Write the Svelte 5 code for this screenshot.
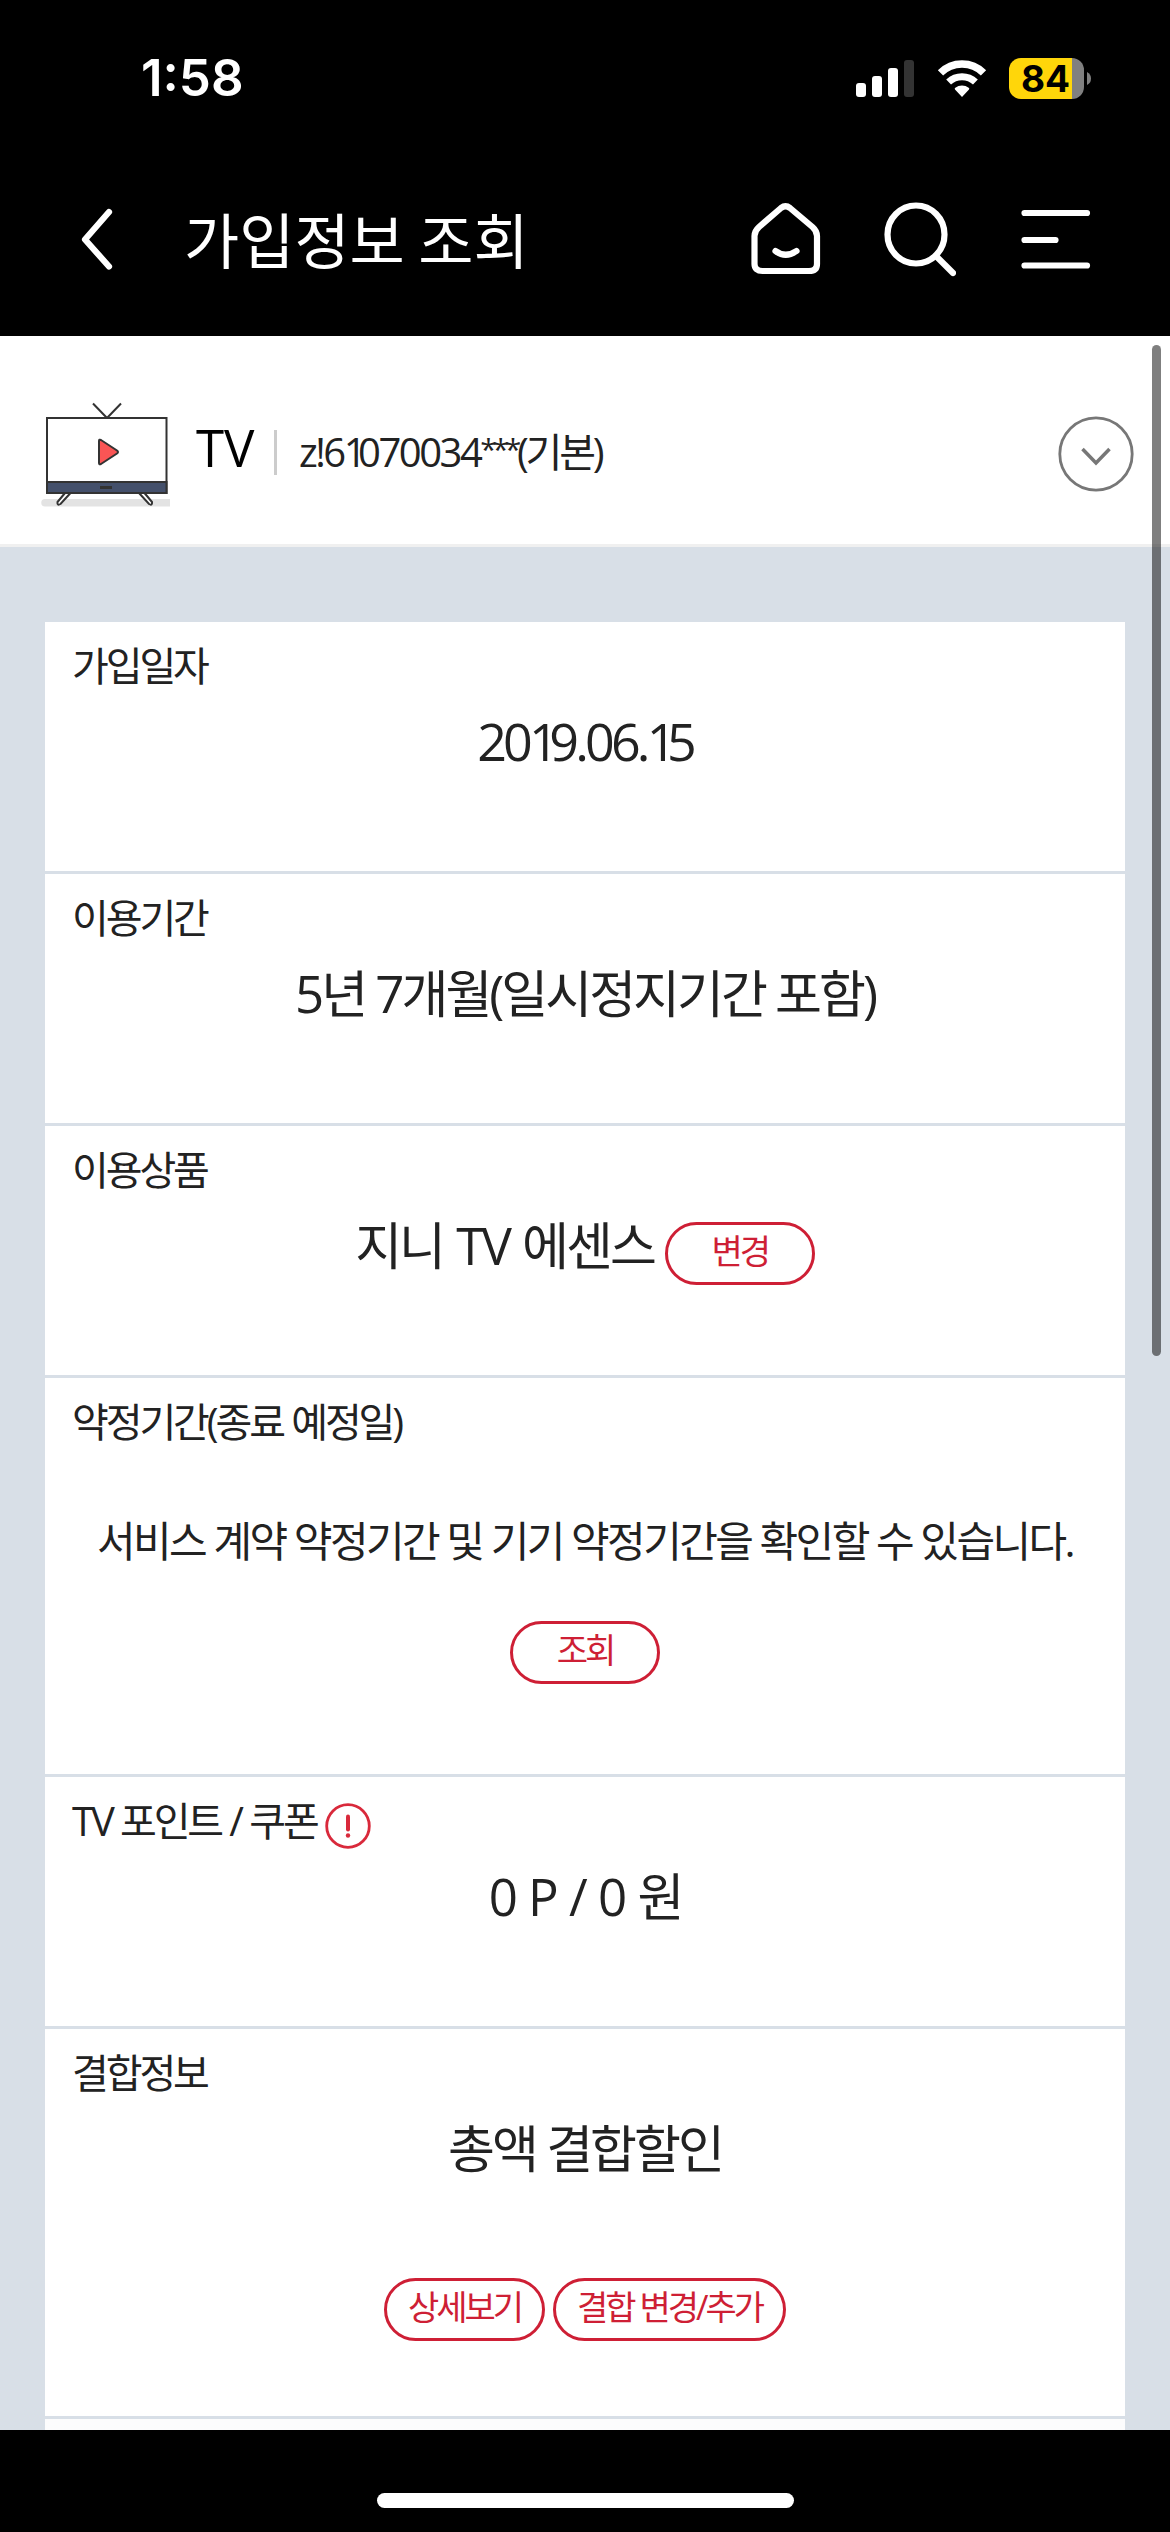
<script lang="ts">
	interface Row {
		label: string;
		value: string;
		kind?: 'date' | 'inline' | 'desc' | 'point' | 'stack';
		info?: boolean;
		buttons?: { text: string; wide?: boolean }[];
	}

	const rows: Row[] = [
		{ label: '가입일자', value: '2019.06.15', kind: 'date' },
		{ label: '이용기간', value: '5년 7개월(일시정지기간 포함)' },
		{ label: '이용상품', value: '지니 TV 에센스', kind: 'inline', buttons: [{ text: '변경' }] },
		{
			label: '약정기간(종료 예정일)',
			value: '서비스 계약 약정기간 및 기기 약정기간을 확인할 수 있습니다.',
			kind: 'desc',
			buttons: [{ text: '조회' }]
		},
		{ label: 'TV 포인트 / 쿠폰', value: '0 P / 0 원', kind: 'point', info: true },
		{
			label: '결합정보',
			value: '총액 결합할인',
			kind: 'stack',
			buttons: [{ text: '상세보기', wide: true }, { text: '결합 변경/추가', wide: true }]
		}
	];

	// the tabular 1 and the asterisks leave wide gaps, so numbers are split to tighten them
	function splitNumber(text: string) {
		return text.split(/(1|\*+)/).filter(Boolean);
	}
</script>

{#snippet number(text: string)}{#each splitNumber(text) as part, i (i)}<span class:one={part === '1'} class:star={part[0] === '*'}>{part}</span>{/each}{/snippet}

<div class="screen">
	<div class="status">
		<span class="time">1:58</span>
		<div class="status-icons">
			<svg class="signal" width="58" height="37" viewBox="0 0 58 37">
				<rect x="0" y="23" width="10" height="14" rx="3" fill="#fff" />
				<rect x="16" y="16" width="10" height="21" rx="3" fill="#fff" />
				<rect x="32" y="8" width="10" height="29" rx="3" fill="#fff" />
				<rect x="48" y="0" width="10" height="37" rx="3" fill="#333" />
			</svg>
			<svg class="wifi" width="50" height="37" viewBox="0 0 50 37">
				<path d="M3.5 12.8a30.5 30.5 0 0 1 43 0" fill="none" stroke="#fff" stroke-width="7.5" />
				<path d="M11.6 22a19.5 19.5 0 0 1 26.8 0" fill="none" stroke="#fff" stroke-width="7" />
				<path d="M25 37l-7-7.5q-.8-1 .3-1.8a11 11 0 0 1 13.4 0q1.1 .8 .3 1.8z" fill="#fff" />
			</svg>
			<div class="battery">84</div>
			<svg class="nub" width="4" height="13" viewBox="0 0 4 13">
				<path d="M0 0q4 2 4 6.5t-4 6.5z" fill="#808080" />
			</svg>
		</div>
	</div>

	<header>
		<svg class="back" width="34" height="64" viewBox="0 0 34 64">
			<path d="M29 4L5 31.5l24 27" />
		</svg>
		<h1>가입정보 조회</h1>
		<nav>
			<svg width="70" height="74" viewBox="0 0 70 74">
				<path d="M30 6q4.5-3.5 9 0l22.5 19q4.5 4 4.5 9v28q0 7-8 7H11.5q-8 0-8-7V34q0-5 4.5-9z" />
				<path d="M24.5 49q10 7.5 21 0" />
			</svg>
			<svg width="72" height="76" viewBox="0 0 72 76">
				<ellipse cx="32" cy="33.5" rx="28.5" ry="29" />
				<path d="M52 55l17 17" />
			</svg>
			<svg width="70" height="64" viewBox="0 0 70 64">
				<path d="M3.5 4h62.5M3.5 31h31M3.5 56.5h62.5" />
			</svg>
		</nav>
	</header>

	<main>
		<section class="product">
			<svg class="tv" width="130" height="106" viewBox="0 0 130 106">
				<path d="M4 97h125v7.5H4a3.7 3.7 0 0 1 0-7.5z" fill="#e3e3e3" />
				<g stroke="#333" stroke-width="2" fill="none">
					<path d="M52 1.5l14 14.5 14-14.5" />
					<path d="M24 91l-7.5 9q-.5 4 3 2l10-11M98 91l10 11q3.5 2 3-2l-7.5-9" fill="#fff" />
					<rect x="6" y="16" width="119.5" height="75" fill="#fff" />
					<path d="M6 80h119.5v11H6z" fill="#44506b" />
					<path d="M59 85.5h12" stroke-width="3" />
					<path d="M58 39q0-2 2-1l16 10.5q2 1.5 0 3L60 62q-2 1-2-1z" fill="#fa5555" />
				</g>
			</svg>
			<strong>TV</strong>
			<i class="bar"></i>
			<span class="account"><span class="id">{@render number('z!61070034***')}</span>(기본)</span>
			<svg class="toggle" width="76" height="76" viewBox="0 0 76 76" fill="none" stroke="#777">
				<circle cx="38" cy="38" r="36.2" stroke-width="2.8" />
				<path d="M24.5 33l13.5 14 13.5-14" stroke-width="3.5" />
			</svg>
		</section>

		<div class="card">
			{#each rows as row (row.label)}
				<div class="row {row.kind ?? ''}">
					<div class="label">
						{row.label}
						{#if row.info}
							<svg width="46" height="46" viewBox="0 0 46 46">
								<circle cx="23" cy="23" r="21.3" fill="none" stroke="#d9293b" stroke-width="2.8" />
								<path d="M23 13.5v13" stroke="#d9293b" stroke-width="4" stroke-linecap="round" />
								<circle cx="23" cy="32.5" r="2.2" fill="#d9293b" />
							</svg>
						{/if}
					</div>
					<div class="value">
						{#if row.kind === 'date'}
							<span>{@render number(row.value)}</span>
						{:else}
							<span>{row.value}</span>
						{/if}
						{#if row.buttons}
							<div class="buttons">
								{#each row.buttons as button (button.text)}
									<button type="button" class:wide={button.wide}>{button.text}</button>
								{/each}
							</div>
						{/if}
					</div>
				</div>
			{/each}
			<div class="next"></div>
		</div>
		<div class="scrollbar"></div>
	</main>

	<footer><div class="indicator"></div></footer>
</div>

<style>
	:global(body) {
		margin: 0;
		background: #000;
	}

	.screen {
		width: 1170px;
		height: 2532px;
		display: flex;
		flex-direction: column;
		overflow: hidden;
		background: #000;
		color: #222;
		font-family: 'Open Sans', 'Noto Sans CJK KR', sans-serif;
	}

	.status {
		height: 156px;
		flex: none;
		display: flex;
		justify-content: space-between;
		box-sizing: border-box;
		padding: 0 79px 0 141px;
		color: #fff;
		font-family: Inter, sans-serif;
	}

	.time {
		font-size: 51px;
		font-weight: 600;
		line-height: 156px;
	}

	.status-icons {
		display: flex;
		align-items: center;
	}

	.wifi {
		margin: 0 22px 0 23px;
	}

	.battery {
		width: 75px;
		height: 41px;
		border-radius: 12px;
		background: linear-gradient(90deg, #ffd60a 63px, #808080 63px);
		color: #000;
		font-size: 37px;
		font-weight: 700;
		line-height: 41px;
		text-indent: 12px;
	}

	.nub {
		margin-left: 3px;
	}

	header {
		height: 180px;
		flex: none;
		display: flex;
		box-sizing: border-box;
		padding: 46px 79px 0 80px;
		color: #fff;
	}

	header svg {
		fill: none;
		stroke: #fff;
		stroke-width: 6.2;
		stroke-linecap: round;
		stroke-linejoin: round;
	}

	.back {
		margin-top: 6px;
	}

	h1 {
		margin: -3px 0 0 70px;
		font: 400 60px/78px 'Noto Sans CJK KR', sans-serif;
	}

	nav {
		margin-left: auto;
		display: flex;
	}

	nav svg:nth-child(2) {
		margin: -1px 65px 0 63px;
	}

	nav svg:nth-child(3) {
		margin-top: 7px;
	}

	main {
		position: relative;
		flex: none;
		height: 2094px;
		overflow: hidden;
		background: #d8dfe7;
	}

	.product {
		height: 211px;
		box-sizing: border-box;
		display: flex;
		padding: 0 36px 0 41px;
		border-bottom: 3px solid #f0f0f0;
		background: #fff;
	}

	.tv {
		margin-top: 66px;
	}

	strong {
		margin: 76px 0 0 25px;
		width: 58px;
		color: #000;
		font-size: 51px;
		font-weight: 400;
		line-height: 70px;
	}

	.bar {
		width: 3px;
		height: 45px;
		margin: 94px 0 0 20px;
		background: #ccc;
	}

	.account {
		margin: 84px 0 0 22px;
		font-size: 40px;
		line-height: 64px;
		letter-spacing: -3.2px;
	}

	.id {
		letter-spacing: -2.5px;
	}

	.id .one {
		letter-spacing: -8.5px;
	}

	.id .star {
		font-size: 30px;
		line-height: 0;
		letter-spacing: -4.3px;
		vertical-align: 7px;
	}

	.toggle {
		margin: 80px 0 0 auto;
	}

	.card {
		width: 1080px;
		margin: 75px auto 0;
	}

	.row {
		height: 252px;
		box-sizing: border-box;
		padding: 12px 27px 0;
		border-bottom: 3px solid #d8dfe7;
		background: #fff;
	}

	.row.desc {
		height: 399px;
	}

	.row.stack {
		height: 390px;
	}

	.label {
		height: 62px;
		display: flex;
		gap: 8px;
		font-size: 40px;
		line-height: 64px;
		letter-spacing: -3.1px;
		word-spacing: 1px;
	}

	.label svg {
		margin-top: 14px;
	}

	.value {
		display: flex;
		justify-content: center;
		font-size: 51px;
		line-height: 90px;
		letter-spacing: -3px;
		white-space: nowrap;
	}

	.date .value {
		font-size: 52px;
		letter-spacing: -3.8px;
	}

	.date .one {
		letter-spacing: -9.6px;
	}

	.point .value {
		word-spacing: 3px;
	}

	.inline .value {
		gap: 11px;
		word-spacing: 3px;
	}

	.inline button {
		margin-top: 22px;
	}

	.desc .value,
	.stack .value {
		flex-direction: column;
		align-items: center;
	}

	.desc .value {
		padding-top: 44px;
		font-size: 42px;
		letter-spacing: -2.6px;
	}

	.buttons {
		display: flex;
		gap: 8px;
	}

	.desc .buttons {
		margin-top: 35px;
	}

	.stack .buttons {
		margin-top: 85px;
	}

	button {
		height: 63px;
		width: 150px;
		box-sizing: border-box;
		padding: 0 0 5px;
		border: 3px solid #ce1f35;
		border-radius: 32px;
		background: #fff;
		color: #ce1f35;
		font: inherit;
		font-size: 34px;
		line-height: 52px;
		letter-spacing: -3px;
	}

	button.wide {
		width: auto;
		padding: 0 21px 5px;
	}

	.next {
		height: 11px;
		background: #fcfcfd;
	}

	.scrollbar {
		position: absolute;
		top: 9px;
		right: 9px;
		width: 9px;
		height: 1011px;
		border-radius: 5px;
		background: rgba(0, 0, 0, 0.5);
	}

	footer {
		height: 102px;
		flex: none;
		display: flex;
		justify-content: center;
	}

	.indicator {
		width: 417px;
		height: 15px;
		margin-top: 63px;
		border-radius: 8px;
		background: #fff;
	}
</style>
